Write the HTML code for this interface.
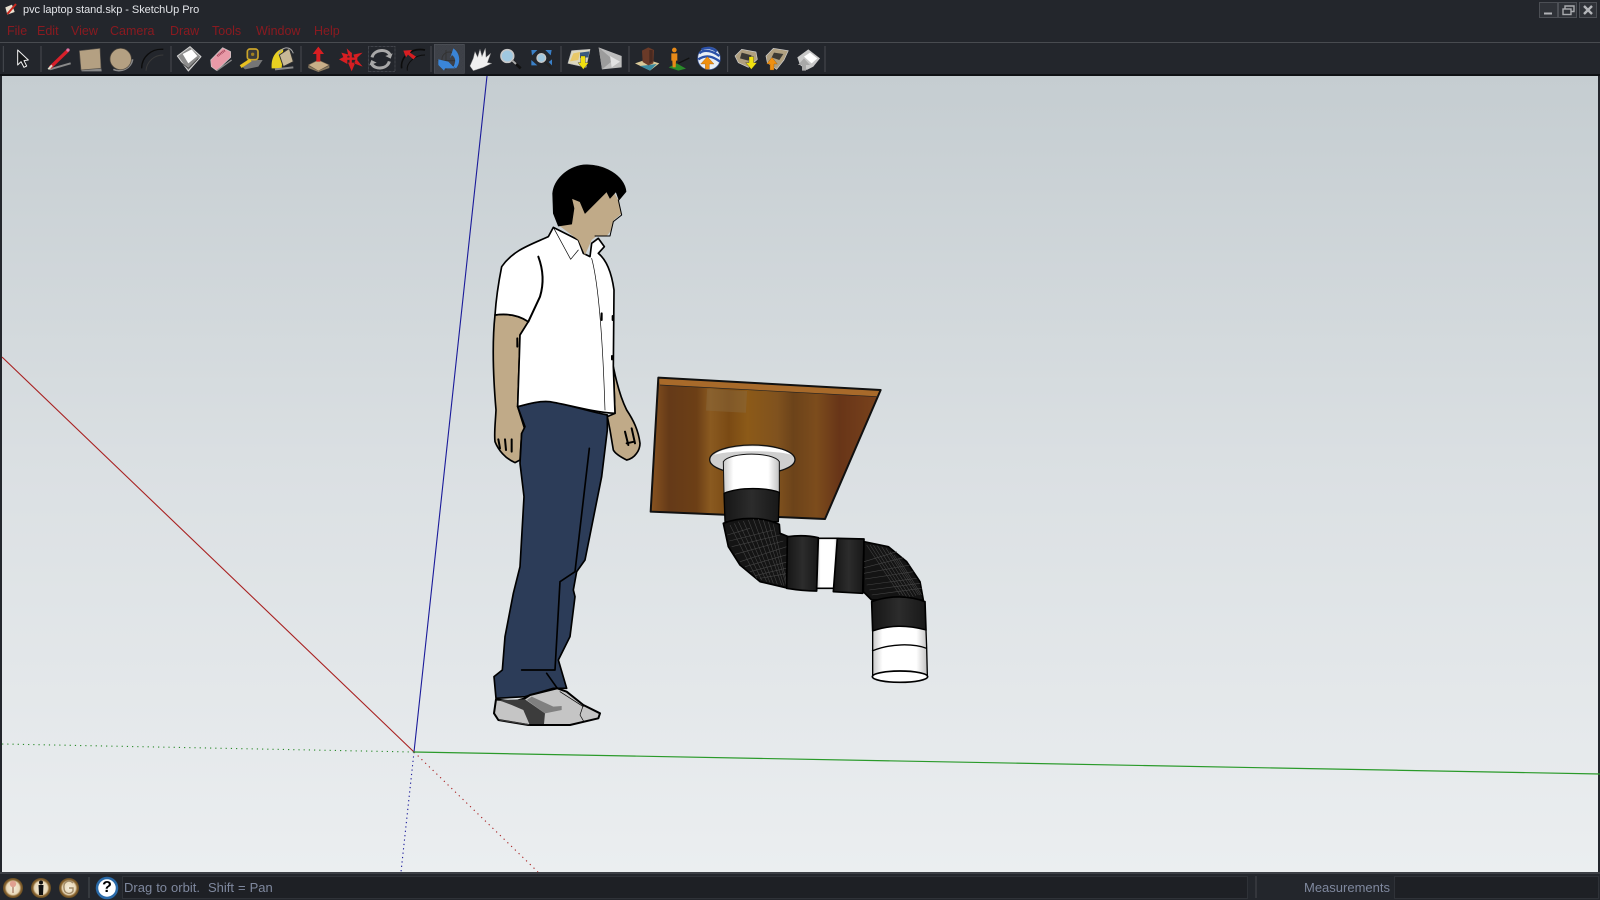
<!DOCTYPE html>
<html><head><meta charset="utf-8"><title>pvc laptop stand.skp - SketchUp Pro</title>
<style>
html,body{margin:0;padding:0;width:1600px;height:900px;overflow:hidden;background:#23262c}
body{position:relative;font-family:"Liberation Sans",sans-serif}
svg{position:absolute;left:0;top:0;filter:blur(.3px)}
.t{position:absolute;white-space:pre;line-height:16px}
.m{color:#8a1a20;font-size:13px;top:23px;filter:blur(.3px)}
</style></head><body>
<svg width="1600" height="900" viewBox="0 0 1600 900" xmlns="http://www.w3.org/2000/svg">
<defs>
<linearGradient id="sky" x1="0" y1="0" x2="0" y2="1"><stop offset="0" stop-color="#c5cdd1"/><stop offset=".5" stop-color="#dbe0e3"/><stop offset="1" stop-color="#ebeef0"/></linearGradient>
<linearGradient id="wood" x1="0" y1="0" x2="1" y2="0">
<stop offset="0" stop-color="#8a5420"/><stop offset=".08" stop-color="#653a18"/><stop offset=".2" stop-color="#6c3f16"/><stop offset=".26" stop-color="#8a5a20"/><stop offset=".34" stop-color="#7a4a14"/><stop offset=".42" stop-color="#8c5a18"/><stop offset=".55" stop-color="#80521e"/><stop offset=".62" stop-color="#6c431a"/><stop offset=".72" stop-color="#7c4c1c"/><stop offset=".82" stop-color="#683518"/><stop offset="1" stop-color="#7a431c"/></linearGradient>
<linearGradient id="pw" x1="0" y1="0" x2="1" y2="0"><stop offset="0" stop-color="#c8c8c8"/><stop offset=".18" stop-color="#fff"/><stop offset=".8" stop-color="#fff"/><stop offset="1" stop-color="#c0c0c0"/></linearGradient>
<linearGradient id="pb" x1="0" y1="0" x2="1" y2="0"><stop offset="0" stop-color="#161616"/><stop offset=".5" stop-color="#2c2c2c"/><stop offset="1" stop-color="#181818"/></linearGradient>
<pattern id="chk" width="4" height="4" patternUnits="userSpaceOnUse"><rect width="4" height="4" fill="#34373e"/><rect width="2" height="2" fill="#484b52"/><rect x="2" y="2" width="2" height="2" fill="#484b52"/></pattern>
<radialGradient id="st"><stop offset="0" stop-color="#f6eedd"/><stop offset=".62" stop-color="#e8d8b8"/><stop offset=".78" stop-color="#8a6530"/><stop offset="1" stop-color="#5a431f"/></radialGradient>
</defs>
<!-- chrome -->
<rect width="1600" height="900" fill="#23262c"/>
<line x1="0" x2="1600" y1="42.5" y2="42.5" stroke="#484b50"/>
<rect x="0" y="74" width="1600" height="2" fill="#0f1114"/>
<rect x="2" y="76" width="1596" height="796" fill="url(#sky)"/>
<rect x="0" y="872" width="1600" height="2" fill="#3d4046"/>
<!-- axes -->
<g fill="none">
<line x1="414" y1="752" x2="487" y2="76" stroke="#1a1a9a" stroke-width="1.1"/>
<line x1="414" y1="752" x2="401" y2="872" stroke="#1a1a9a" stroke-width="1.1" stroke-dasharray="1.2 3.2"/>
<line x1="414" y1="752" x2="2" y2="357" stroke="#a82020" stroke-width="1.1"/>
<line x1="414" y1="752" x2="538" y2="872" stroke="#a82020" stroke-width="1.1" stroke-dasharray="1.2 4"/>
<line x1="414" y1="752" x2="1600" y2="774" stroke="#2a9a2a" stroke-width="1.2"/>
<line x1="414" y1="752" x2="2" y2="744" stroke="#2a8a2a" stroke-width="1.1" stroke-dasharray="1.2 4"/>
</g>
<!-- person -->
<g transform="translate(470 150) scale(.33333)" stroke="#000" stroke-width="5" stroke-linejoin="round" stroke-linecap="round">
<path fill="#c0aa88" d="M75,495 C68,560 66,640 78,780 C76,820 72,850 75,875 C85,900 105,925 135,938 L150,930 L155,850 L170,880 L190,880 L165,840 L143,770 L148,620 L150,555 L175,515 C145,495 110,490 75,495Z"/>
<path fill="#c0aa88" d="M430,650 C440,700 455,750 470,780 C490,810 505,840 510,880 C510,900 495,925 470,930 C450,920 435,910 430,900 L420,840 L412,800 L435,790Z"/>
<path d="M85,868 L90,895 M105,868 L108,900 M125,868 L125,905 M465,845 L475,885 M485,835 L495,880 M470,880 L492,875" fill="none" stroke-width="6"/>
<path fill="#2c3c58" d="M143,770 C180,760 210,752 240,755 C300,765 360,785 412,795 L412,840 L395,980 L345,1230 L320,1265 L310,1320 L315,1340 L300,1460 L265,1530 L290,1615 L250,1615 L165,1640 L78,1645 L72,1580 L97,1560 L105,1460 L130,1330 L150,1250 L162,1040 L150,940 L155,850 L165,830Z"/>
<path d="M358,895 L315,1265 L270,1295 L255,1560 L155,1560 M230,1570 L262,1615" fill="none" stroke-width="5"/>
<path fill="#c5c5c5" d="M78,1648 L72,1690 L85,1710 L175,1725 L300,1725 L385,1705 L390,1690 L340,1665 L290,1625 L262,1615 L180,1635 L165,1645 L130,1655Z" stroke-width="6"/>
<path fill="#3c3c3c" stroke="none" d="M85,1650 L165,1648 L225,1690 L222,1722 L178,1722 L160,1680 L125,1665Z M85,1708 L175,1722 L180,1726 L90,1712Z"/>
<path fill="#808080" stroke="none" d="M170,1650 L185,1640 L250,1670 L275,1668 L275,1680 L225,1690Z"/>
<path fill="none" stroke-width="2" d="M340,1665 L330,1695 L340,1712 M270,1625 L340,1670"/>
<path fill="#fff" stroke-width="5" d="M250,232 L235,260 C180,285 130,300 95,350 C85,400 78,450 75,495 C110,490 145,495 175,515 L150,555 L148,620 L143,770 C180,760 210,752 240,755 C300,765 360,785 435,790 L430,650 L432,420 C425,370 410,330 385,310 L403,290 L385,265 L365,280 L360,320 L340,310 L325,270Z"/>
<path fill="none" stroke-width="2" d="M250,232 L302,328 L325,300 M365,325 C385,400 398,560 405,780"/>
<path fill="none" stroke-width="6" d="M205,320 C220,360 222,400 210,440 L175,515 M395,490 L395,510 M428,498 L428,510 M426,618 L426,628 M142,565 L142,590"/>
<path fill="#c0aa88" stroke="none" d="M300,145 L430,125 L445,150 L455,190 L432,210 L425,240 L410,258 L380,258 L365,270 L345,315 L325,270 L265,225 L300,222Z"/>
<path fill="#000" stroke-width="2" d="M248,130 C252,90 290,52 340,45 C400,40 465,78 468,125 L447,150 L438,125 L420,145 L410,125 L345,190 L330,155 L305,145 L312,175 L305,222 L265,228 L250,190Z"/>
<path fill="none" stroke-width="3" d="M375,258 L420,258 L430,215 L455,195 L445,150"/>
</g>
<!-- table and pipe -->
<g transform="translate(640 365) scale(.33333)" stroke-linejoin="round">
<path fill="url(#wood)" d="M55,38 L722,75 L555,462 L32,440Z"/>
<rect x="200" y="75" width="120" height="65" fill="#8a6a40" opacity=".45" transform="rotate(3 260 100)"/>
<path fill="#a86a2a" d="M55,38 L722,75 L715,95 L60,60Z"/>
<path fill="none" stroke="#111" stroke-width="6" d="M55,38 L722,75 L555,462 L32,440Z"/>
<path fill="none" stroke="#222" stroke-width="2" d="M60,60 L715,95"/>
<ellipse cx="337" cy="284" rx="128" ry="44" fill="#cfcfcf" stroke="#111" stroke-width="4"/>
<path fill="#fff" d="M222,270 C260,235 420,235 455,270 C420,255 260,255 222,270Z"/>
<path fill="url(#pw)" stroke="#111" stroke-width="3" d="M250,290 C270,260 400,260 418,290 L418,385 L252,385Z"/>
<path fill="url(#pb)" stroke="#000" stroke-width="4" d="M252,385 C300,365 380,368 418,382 L415,470 L255,470Z"/>
<path fill="#141414" stroke="#000" stroke-width="5" d="M250,475 C300,455 370,455 418,478 L420,505 L445,515 L445,670 L360,650 L300,600 L265,545Z"/>
<g fill="none" stroke="#444" stroke-width="1.8">
<path d="M270,480 L350,640 M283,475 L365,645 M295,470 L380,650 M310,468 L390,652 M325,465 L400,655 M340,462 L412,658 M355,462 L425,660 M370,465 L432,662 M385,470 L440,665 M400,478 L443,668 M262,510 L330,490 M268,528 L400,495 M275,545 L420,510 M285,568 L430,528 M300,590 L440,545 M315,605 L445,568 M330,620 L445,590 M345,632 L445,608 M360,640 L445,625"/>
</g>
<path fill="url(#pb)" stroke="#000" stroke-width="5" d="M442,515 C480,510 510,512 535,518 L530,678 C500,678 470,675 440,670Z"/>
<path fill="url(#pw)" stroke="#000" stroke-width="5" d="M535,520 L595,520 L585,670 L530,670Z"/>
<path fill="url(#pb)" stroke="#000" stroke-width="5" d="M592,520 L672,522 L668,685 L580,680Z"/>
<path fill="#141414" stroke="#000" stroke-width="5" d="M672,530 L745,545 L800,590 L840,650 L850,705 L695,705 L670,680Z"/>
<g fill="none" stroke="#444" stroke-width="1.8">
<path d="M680,540 L780,690 M690,540 L790,692 M700,540 L800,695 M712,542 L810,695 M725,545 L820,695 M738,550 L828,692 M750,560 L835,690 M762,570 L840,690 M775,580 L845,690 M672,590 L770,560 M672,608 L790,578 M672,625 L810,600 M675,642 L820,620 M680,660 L830,640 M688,675 L840,655 M695,690 L845,670"/>
</g>
<path fill="url(#pb)" stroke="#000" stroke-width="5" d="M695,710 C750,690 810,692 855,710 L858,795 C800,780 750,780 698,798Z"/>
<path fill="url(#pw)" stroke="#000" stroke-width="4" d="M698,798 C750,780 800,780 858,795 L860,848 L862,930 L698,930 L698,855Z"/>
<path fill="none" stroke="#000" stroke-width="4" d="M696,858 C750,835 820,835 860,850"/>
<ellipse cx="780" cy="935" rx="83" ry="17" fill="#fff" stroke="#000" stroke-width="5"/>
</g>
<!-- toolbar icons group 1 -->
<g transform="scale(.33333)" stroke-linejoin="round">
<g stroke="#484b50" stroke-width="3"><line x1="10" x2="10" y1="138" y2="216"/><line x1="123" x2="123" y1="138" y2="216"/><line x1="513" x2="513" y1="138" y2="216"/><line x1="903" x2="903" y1="138" y2="216"/><line x1="1293" x2="1293" y1="138" y2="216"/></g>
<path d="M53,150 L53,195 L63,185 L72,202 L80,198 L72,182 L85,180Z" fill="#15171a" stroke="#f2f2f2" stroke-width="3"/>
<path d="M150,208 L212,190" stroke="#8a8a8a" stroke-width="6"/>
<path d="M150,203 L203,152" stroke="#d8202a" stroke-width="10"/><path d="M145,208 L156,196" stroke="#ddc" stroke-width="6"/>
<circle cx="204" cy="150" r="5" fill="#e070a0"/>
<path d="M243,208 L304,206 L305,214 L245,214Z" fill="#888"/>
<path d="M238,152 L300,145 L303,205 L243,210Z" fill="#b4a082" stroke="#55504a" stroke-width="2"/>
<path d="M340,208 C360,218 392,208 398,178" fill="none" stroke="#8a8a8a" stroke-width="5"/>
<circle cx="362" cy="177" r="32" fill="#b4a082" stroke="#50483e" stroke-width="2"/>
<path d="M425,205 C425,170 455,145 490,148" fill="none" stroke="#0c0c0c" stroke-width="4"/>
<path d="M438,212 C440,185 462,165 490,165" fill="none" stroke="#3a3a3a" stroke-width="3"/>
<path d="M532,168 L570,140 L603,170 L565,213Z" fill="#8c8c8c" stroke="#d5d5d5" stroke-width="3"/>
<path d="M548,162 L575,148 L592,168 L565,190Z" fill="#fff"/>
<path d="M540,185 L565,205 L595,175" fill="none" stroke="#333" stroke-width="2"/>
<path d="M632,180 L668,143 L692,155 L692,172 L650,212 L634,200Z" fill="#e89aa8" stroke="#c8c8c8" stroke-width="2"/>
<path d="M652,168 L676,150" stroke="#a04458" stroke-width="7" stroke-dasharray="3 2"/>
<path d="M650,212 L695,180" stroke="#8a8a8a" stroke-width="4"/>
<path d="M722,195 L745,180 L788,180 L775,200 L735,208Z" fill="#8a8a8a" opacity=".8"/>
<rect x="742" y="147" width="32" height="32" rx="8" fill="#3a3a3a" stroke="#caa42a" stroke-width="5"/>
<circle cx="758" cy="163" r="5" fill="#a08020"/>
<path d="M722,200 L752,180" stroke="#e8c020" stroke-width="10"/>
<path d="M815,205 C812,170 830,150 850,145 L845,205Z" fill="#e8d020"/>
<path d="M838,165 L868,145 L880,185 L850,200Z" fill="#c8b898" stroke="#333" stroke-width="3"/>
<path d="M835,165 C845,140 870,135 880,160" fill="none" stroke="#aaa" stroke-width="3"/>
<path d="M825,208 L880,202" stroke="#888" stroke-width="6"/>
<path d="M925,195 L955,180 L988,195 L955,213Z" fill="#c8ae88" stroke="#6a5a48" stroke-width="2"/>
<path d="M925,197 L955,213 L988,197 L988,204 L955,216 L925,204Z" fill="#8a7a60"/>
<path d="M955,140 L972,162 L961,162 L961,185 L949,185 L949,162 L938,162Z" fill="#d81e22"/>
<path d="M1040,145 L1056,160 L1046,170Z M1017,178 L1042,165 L1042,192Z M1088,158 L1060,164 L1066,178Z M1055,214 L1066,188 L1044,188Z M1088,200 L1062,190 L1068,176Z M1024,158 L1046,164 L1034,180Z" fill="#d81e22"/>
<path d="M1030,176 L1072,176 M1052,158 L1052,198" stroke="#d81e22" stroke-width="7"/>
<rect x="1105" y="139" width="80" height="76" fill="none" stroke="#6a6d74" stroke-width="2" stroke-dasharray="2 2"/>
<path d="M1116,172 C1122,148 1160,145 1170,164" fill="none" stroke="#a8a8a8" stroke-width="9"/>
<path d="M1178,160 L1172,176 L1156,168Z" fill="#a8a8a8"/>
<path d="M1168,184 C1162,208 1125,210 1115,192" fill="none" stroke="#a8a8a8" stroke-width="9"/>
<path d="M1108,196 L1114,180 L1130,188Z" fill="#a8a8a8"/>
<path d="M1205,205 C1200,170 1235,142 1275,150" fill="none" stroke="#0c0c0c" stroke-width="5"/>
<path d="M1222,212 C1218,188 1245,165 1275,165" fill="none" stroke="#0c0c0c" stroke-width="3"/>
<path d="M1210,152 L1236,150 L1230,158 L1248,170 L1240,178 L1224,164 L1218,172Z" fill="#d81e22"/>
</g>
<!-- toolbar group 2 -->
<g transform="translate(430 30) scale(.33333)" stroke-linejoin="round">
<g stroke="#484b50" stroke-width="3"><line x1="393" x2="393" y1="48" y2="126"/><line x1="597" x2="597" y1="48" y2="126"/><line x1="893" x2="893" y1="48" y2="126"/><line x1="1185" x2="1185" y1="48" y2="126"/></g>
<rect x="13" y="43" width="90" height="87" fill="url(#chk)" stroke="#50535a" stroke-width="2"/>
<path d="M48,60 L48,120 M22,92 L88,92" stroke="#333" stroke-width="3"/><circle cx="58" cy="88" r="22" fill="none" stroke="#333" stroke-width="3"/>
<path d="M70,55 C92,70 92,100 78,115 L70,110 C78,95 78,85 66,75 L60,85Z" fill="#3a85d8"/>
<path d="M25,88 L55,95 L75,115 L45,115 L42,122 L25,105Z" fill="#3a85d8"/>
<path d="M120,108 L130,85 L135,65 L143,82 L150,58 L156,80 L166,55 L168,82 L182,70 L172,98 L185,100 L160,112 L130,122Z" fill="#f0f0f0" stroke="#999" stroke-width="1.5"/>
<circle cx="232" cy="78" r="19" fill="#a0c8e0" stroke="#c8c8c8" stroke-width="5"/>
<path d="M247,92 L272,115" stroke="#111" stroke-width="8"/><path d="M247,92 L258,102" stroke="#aaa" stroke-width="6"/>
<circle cx="334" cy="84" r="13" fill="#a0c8e0" stroke="#c8c8c8" stroke-width="4"/>
<path d="M344,95 L365,115" stroke="#222" stroke-width="6"/>
<path d="M304,60 L322,60 L306,76Z M365,60 L346,60 L362,76Z M304,106 L322,106 L304,90Z M356,96 L366,88 L366,106Z" fill="#3a80c8"/>
<path d="M414,100 L425,62 L480,58 L468,112 Z" fill="#dcd8c0" stroke="#bbb" stroke-width="2"/>
<path d="M430,70 L450,66 L445,90 L420,94Z" fill="#e8c868"/><path d="M450,68 L478,64 L475,82 L450,84Z" fill="#3a5a80"/>
<path d="M452,78 L466,78 L466,98 L476,98 L460,118 L444,98 L452,98Z" fill="#f0e010" stroke="#222" stroke-width="1"/>
<path d="M506,52 L575,78 L575,112 L516,118Z" fill="#bdbdbd"/><path d="M506,52 L550,90 L516,118Z" fill="#9c9c9c"/>
<path d="M540,78 L570,95 L545,112Z" fill="#e2e2e2"/>
<path d="M615,100 L650,88 L688,100 L660,122 Z" fill="#d8c898"/><path d="M630,108 L680,102 L660,122Z" fill="#3a8aa0"/>
<path d="M636,62 L655,52 L672,60 L670,100 L655,106 L638,96Z" fill="#6a3a28"/><path d="M658,60 L668,60 L668,95 L658,100Z" fill="#4a2a20"/>
<path d="M716,112 L740,100 L768,116 L745,122Z" fill="#2a8a2a"/><path d="M745,100 L778,84" stroke="#111" stroke-width="4"/>
<circle cx="733" cy="60" r="7" fill="#e88a18"/><path d="M724,70 L742,70 L742,92 L738,92 L737,112 L728,112 L727,92 L724,92Z" fill="#e88a18"/>
<circle cx="837" cy="85" r="34" fill="#e8eef6" stroke="#405a98" stroke-width="2"/>
<path d="M808,70 C825,55 850,65 868,78 M805,88 C830,72 850,80 870,95 M815,58 C830,50 850,55 860,65" stroke="#2a50a8" stroke-width="7" fill="none"/>
<path d="M826,118 L826,102 L812,102 L832,80 L852,102 L838,102 L838,118Z" fill="#f09010" stroke="#8a5010" stroke-width="1"/>
<path d="M915,78 L935,58 L978,66 L982,88 L955,112 L925,98Z" fill="#b0a080" stroke="#d0d0d0" stroke-width="2"/>
<path d="M935,68 L965,76 L955,92 L930,85Z" fill="#3c3a34"/>
<path d="M957,80 L971,80 L971,98 L981,98 L964,118 L947,98 L957,98Z" fill="#f0e010" stroke="#222" stroke-width="1"/>
<path d="M1008,78 L1030,55 L1075,62 L1062,90 L1040,118 L1012,98Z" fill="#b0a080" stroke="#d0d0d0" stroke-width="2"/>
<path d="M1032,68 L1060,72 L1048,90 L1025,82Z" fill="#3c3a34"/>
<path d="M1020,120 L1020,102 L1010,102 L1026,82 L1042,102 L1032,102 L1032,120Z" fill="#f09010" stroke="#7a4a10" stroke-width="1"/>
<path d="M1102,82 L1135,58 L1170,85 L1150,110 L1130,120 L1110,105Z" fill="#c8c8c8"/>
<path d="M1122,80 L1140,68 L1162,85 L1145,100Z" fill="#fff"/>
<path d="M1116,122 L1116,105 L1104,105 L1122,85 L1140,105 L1128,105 L1128,122Z" fill="#a8a8a8"/>
</g>
<g transform="scale(.33333)">
<path d="M16,22 L36,14 L44,36 L22,44Z" fill="#e8e0d0"/><path d="M22,42 L48,12" stroke="#c8281e" stroke-width="6"/>
</g>
<g fill="none" stroke="#4c4f55" stroke-width="1"><rect x="1539.5" y="2.5" width="18" height="15" fill="#2f3238"/><rect x="1558.5" y="2.5" width="18" height="15" fill="#2f3238"/><rect x="1579.5" y="2.5" width="17" height="15" fill="#2f3238"/></g>
<rect x="1544" y="12.5" width="8" height="2" fill="#b0b2b6"/>
<g fill="none" stroke="#a8aaae" stroke-width="1.4"><rect x="1563" y="9" width="8" height="5.5"/><path d="M1565,8.5 V6 H1574 V11.5 H1571.5"/></g>
<path d="M1584,6 L1592,14 M1592,6 L1584,14" stroke="#b4b6ba" stroke-width="2.4"/>
<g stroke="#23262c"><circle cx="13" cy="888" r="10.5" fill="url(#st)"/><circle cx="41" cy="888" r="10.5" fill="url(#st)"/><circle cx="69" cy="888" r="10.5" fill="url(#st)"/></g>
<path d="M13,893 V887" stroke="#b08a70" stroke-width="1.5"/><circle cx="13" cy="884" r="3.2" fill="#e0a090"/>
<circle cx="41" cy="882.5" r="2" fill="#111"/><path d="M38.5,885 H43.5 L43,895 H39Z" fill="#111"/>
<path d="M73,883 C69,879 63,882 64,888 C64,894 71,895 73,891 V888 H69" fill="none" stroke="#a08a68" stroke-width="1.4"/>
<line x1="89" x2="89" y1="877" y2="898" stroke="#4a4d52"/>
<circle cx="107" cy="888" r="10" fill="#fff" stroke="#2a6aa8" stroke-width="2.5"/>
<rect x="122.5" y="876.5" width="1125" height="22" fill="#1e2025" stroke="#2f3238"/>
<line x1="1256" x2="1256" y1="876" y2="898" stroke="#44474c"/>
<rect x="1394.5" y="876.5" width="204" height="22" fill="#1e2025" stroke="#2f3238"/>
</svg>
<div class="t" style="left:23px;top:2px;font-size:11px;color:#e2e4e8;letter-spacing:-.05px;filter:blur(.25px)">pvc laptop stand.skp - SketchUp Pro</div>
<div class="t m" style="left:7px;font-size:12.5px">File</div>
<div class="t m" style="left:37px;font-size:12.5px">Edit</div>
<div class="t m" style="left:71px;font-size:12.5px">View</div>
<div class="t m" style="left:110px;font-size:12.5px">Camera</div>
<div class="t m" style="left:170px;font-size:12.5px">Draw</div>
<div class="t m" style="left:212px;font-size:12.5px">Tools</div>
<div class="t m" style="left:256px;font-size:12.5px">Window</div>
<div class="t m" style="left:314px;font-size:12.5px">Help</div>
<div class="t" style="left:100px;top:880px;width:14px;text-align:center;font-size:16px;font-weight:bold;color:#000">?</div>
<div class="t" style="left:124px;top:880px;font-size:13px;word-spacing:.4px;color:#7f889e;filter:blur(.25px)">Drag to orbit.  Shift = Pan</div>
<div class="t" style="left:1304px;top:880px;font-size:13px;color:#7f889e;filter:blur(.25px)">Measurements</div>
</body></html>
